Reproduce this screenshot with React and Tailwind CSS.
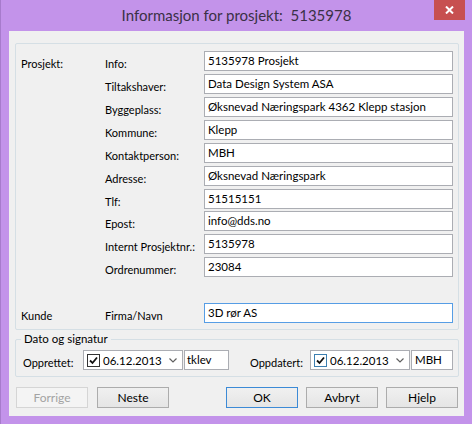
import React from 'react';

const rows = [
  ['Info:', '5135978 Prosjekt'],
  ['Tiltakshaver:', 'Data Design System ASA'],
  ['Byggeplass:', 'Øksnevad Næringspark 4362 Klepp stasjon'],
  ['Kommune:', 'Klepp'],
  ['Kontaktperson:', 'MBH'],
  ['Adresse:', 'Øksnevad Næringspark'],
  ['Tlf:', '51515151'],
  ['Epost:', 'info@dds.no'],
  ['Internt Prosjektnr.:', '5135978'],
  ['Ordrenummer:', '23084'],
];

function Field({ value, focused }) {
  return (
    <div
      className={`h-[20px] flex-1 bg-white border pl-[3px] text-[11.5px] leading-[18px] text-black whitespace-nowrap overflow-hidden ${
        focused ? 'border-[#569de5]' : 'border-[#abadb3]'
      }`}
    >
      {value}
    </div>
  );
}

function Check({ active }) {
  return (
    <div
      className={`w-[13px] h-[13px] bg-white border flex items-center justify-center ${
        active ? 'border-[#3c7fb1]' : 'border-[#333]'
      }`}
    >
      <svg width="9" height="9" viewBox="0 0 9 9">
        <path d="M1 4.5 L3.5 7 L8 1.5" fill="none" stroke="#111" strokeWidth="1.8" />
      </svg>
    </div>
  );
}

function DatePicker({ active }) {
  return (
    <div className="w-[100px] h-[20px] bg-white border border-[#abadb3] flex items-center pl-[3px] pr-[5px]">
      <Check active={active} />
      <span className="ml-[3px] text-[11.5px] leading-[15px] text-black">06.12.2013</span>
      <svg className="ml-auto" width="8" height="5" viewBox="0 0 8 5">
        <path d="M0.5 0.5 L4 4 L7.5 0.5" fill="none" stroke="#606060" strokeWidth="1.2" />
      </svg>
    </div>
  );
}

function Button({ children, disabled, primary, className = '' }) {
  return (
    <div
      className={`w-[72px] h-[21px] flex items-center justify-center text-[12px] border ${
        disabled
          ? 'border-[#d5d5d5] bg-[#f4f4f4] text-[#a3a3a3]'
          : primary
          ? 'border-[#3c8ad6] bg-gradient-to-b from-[#f0f0f0] to-[#e5e5e5] text-black'
          : 'border-[#acacac] bg-gradient-to-b from-[#f0f0f0] to-[#e5e5e5] text-black'
      } ${className}`}
    >
      {children}
    </div>
  );
}

export default function App() {
  return (
    <div className="w-[472px] h-[424px] bg-[#c393ea] flex flex-col px-[8px] pb-[8px] relative font-['Lato',sans-serif] border-l border-[#a77bcc]">
      {/* title bar */}
      <div className="h-[31px] flex items-center justify-center text-[15px] text-[#3a3046] pb-[1px]">
        Informasjon for prosjekt:&nbsp; 5135978
      </div>
      <div className="absolute top-0 right-[7px] w-[31px] h-[20px] bg-[#c75050] flex items-center justify-center">
        <svg width="9" height="8" viewBox="0 0 9 8">
          <path d="M1 0.5 L8 7.5 M8 0.5 L1 7.5" stroke="#fff" strokeWidth="2" />
        </svg>
      </div>

      {/* client area */}
      <div className="flex-1 bg-[#f0f0f0] flex flex-col pt-[12px] text-black text-[11px]">
        {/* Prosjekt group */}
        <div className="ml-[6px] mr-[5px] h-[287px] border border-[#d5dfe5] rounded-[2px] flex flex-col pt-[7px] pl-[5px] pr-[5px]">
          {rows.map(([label, value], i) => (
            <div key={label} className={`flex items-start ${i === 0 ? '' : i === 7 ? 'mt-[2px]' : 'mt-[3px]'}`}>
              <div className="w-[84px] pt-[5px] leading-[15px]">{i === 0 ? 'Prosjekt:' : ''}</div>
              <div className="w-[99px] pt-[5px] leading-[15px] whitespace-nowrap">{label}</div>
              <Field value={value} />
            </div>
          ))}
          <div className="flex items-start mt-auto mb-[6px]">
            <div className="w-[84px] pt-[5px] leading-[15px]">Kunde</div>
            <div className="w-[99px] pt-[5px] leading-[15px]">Firma/Navn</div>
            <Field value="3D rør AS" focused />
          </div>
        </div>

        {/* Dato og signatur group */}
        <div className="relative ml-[6px] mr-[5px] mt-[9px] h-[38px] border border-[#d5dfe5] rounded-[2px] flex items-start pt-[10px] pl-[7px] pr-[5px]">
          <div className="absolute left-[5px] top-[-9px] bg-[#f0f0f0] px-[3px] text-[11.5px] leading-[15px]">
            Dato og signatur
          </div>
          <div className="w-[60px] pt-[5px] leading-[15px] whitespace-nowrap">Opprettet:</div>
          <DatePicker />
          <div className="ml-[1px] w-[45px] h-[20px] bg-white border border-[#abadb3] pl-[2px] text-[11.5px] leading-[18px]">
            tklev
          </div>
          <div className="ml-[21px] w-[60px] pt-[5px] leading-[15px] whitespace-nowrap">Oppdatert:</div>
          <DatePicker active />
          <div className="ml-[1px] flex-1 h-[20px] bg-white border border-[#abadb3] pl-[3px] text-[11.5px] leading-[18px]">
            MBH
          </div>
        </div>

        {/* buttons */}
        <div className="flex mt-[10px] pl-[7px] pr-[6px]">
          <Button disabled>Forrige</Button>
          <Button className="ml-[9px]">Neste</Button>
          <Button primary className="ml-auto">OK</Button>
          <Button className="ml-[8px]">Avbryt</Button>
          <Button className="ml-[8px]">Hjelp</Button>
        </div>
      </div>
    </div>
  );
}
